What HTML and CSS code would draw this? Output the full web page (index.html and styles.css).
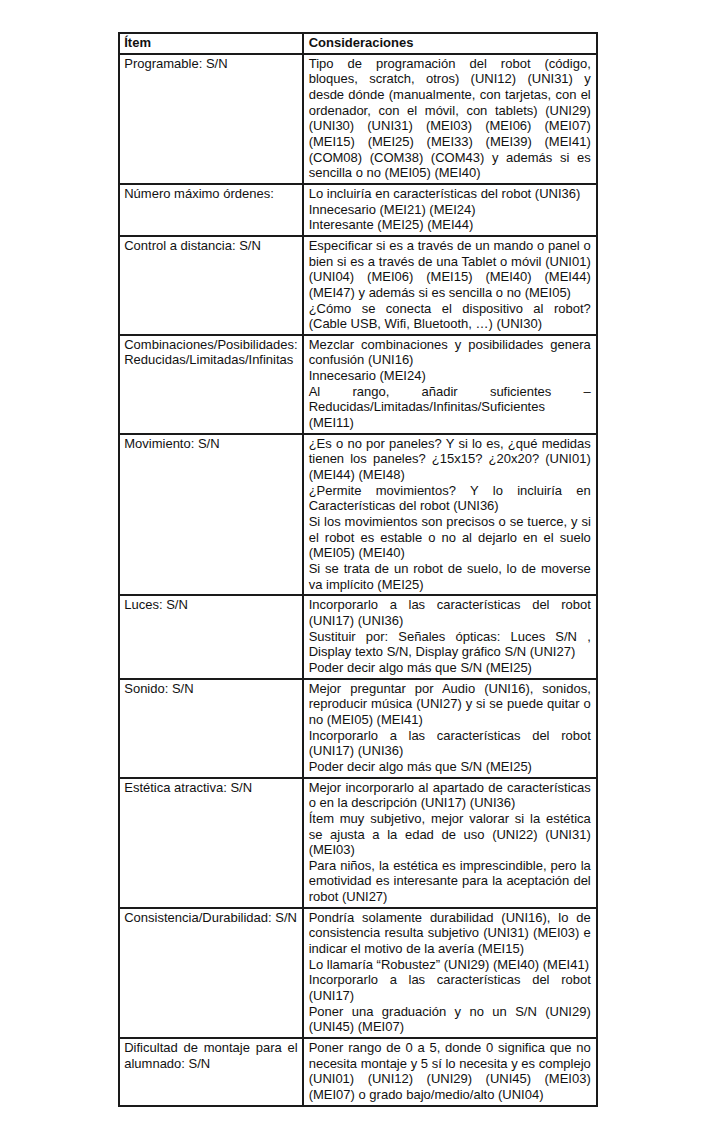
FILE: index.html
```html
<!DOCTYPE html>
<html lang="es">
<head>
<meta charset="utf-8">
<title>Ítem / Consideraciones</title>
<link rel="stylesheet" href="styles.css">
</head>
<body>
<div class="sheet">
<table class="tbl">
  <thead>
    <tr><th class="c1">Ítem</th><th class="c2">Consideraciones</th></tr>
  </thead>
  <tbody>
    <tr>
      <td>Programable: S/N</td>
      <td><p>Tipo de programación del robot (código, bloques, scratch, otros) (UNI12) (UNI31) y desde dónde (manualmente, con tarjetas, con el ordenador, con el móvil, con tablets) (UNI29) (UNI30) (UNI31) (MEI03) (MEI06) (MEI07) (MEI15) (MEI25) (MEI33) (MEI39) (MEI41) (COM08) (COM38) (COM43) y además si es sencilla o no (MEI05) (MEI40)</p></td>
    </tr>
    <tr>
      <td>Número máximo órdenes:</td>
      <td><p>Lo incluiría en características del robot (UNI36)</p><p>Innecesario (MEI21) (MEI24)</p><p>Interesante (MEI25) (MEI44)</p></td>
    </tr>
    <tr>
      <td>Control a distancia: S/N</td>
      <td><p>Especificar si es a través de un mando o panel o bien si es a través de una Tablet o móvil (UNI01) (UNI04) (MEI06) (MEI15) (MEI40) (MEI44) (MEI47) y además si es sencilla o no (MEI05)</p><p>¿Cómo se conecta el dispositivo al robot? (Cable USB, Wifi, Bluetooth, …) (UNI30)</p></td>
    </tr>
    <tr>
      <td>Combinaciones/Posibilidades: Reducidas/Limitadas/Infinitas</td>
      <td><p>Mezclar combinaciones y posibilidades genera confusión (UNI16)</p><p>Innecesario (MEI24)</p><p>Al rango, añadir suficientes – Reducidas/Limitadas/Infinitas/Suficientes (MEI11)</p></td>
    </tr>
    <tr>
      <td>Movimiento: S/N</td>
      <td><p>¿Es o no por paneles? Y si lo es, ¿qué medidas tienen los paneles? ¿15x15? ¿20x20? (UNI01) (MEI44) (MEI48)</p><p>¿Permite movimientos? Y lo incluiría en Características del robot (UNI36)</p><p>Si los movimientos son precisos o se tuerce, y si el robot es estable o no al dejarlo en el suelo (MEI05) (MEI40)</p><p>Si se trata de un robot de suelo, lo de moverse va implícito (MEI25)</p></td>
    </tr>
    <tr>
      <td>Luces: S/N</td>
      <td><p>Incorporarlo a las características del robot (UNI17) (UNI36)</p><p>Sustituir por: Señales ópticas: Luces S/N , Display texto S/N, Display gráfico S/N (UNI27)</p><p>Poder decir algo más que S/N (MEI25)</p></td>
    </tr>
    <tr>
      <td>Sonido: S/N</td>
      <td><p>Mejor preguntar por Audio (UNI16), sonidos, reproducir música (UNI27) y si se puede quitar o no (MEI05) (MEI41)</p><p>Incorporarlo a las características del robot (UNI17) (UNI36)</p><p>Poder decir algo más que S/N (MEI25)</p></td>
    </tr>
    <tr>
      <td>Estética atractiva: S/N</td>
      <td><p>Mejor incorporarlo al apartado de características o en la descripción (UNI17) (UNI36)</p><p>Ítem muy subjetivo, mejor valorar si la estética se ajusta a la edad de uso (UNI22) (UNI31) (MEI03)</p><p>Para niños, la estética es imprescindible, pero la emotividad es interesante para la aceptación del robot (UNI27)</p></td>
    </tr>
    <tr>
      <td>Consistencia/Durabilidad: S/N</td>
      <td><p>Pondría solamente durabilidad (UNI16), lo de consistencia resulta subjetivo (UNI31) (MEI03) e indicar el motivo de la avería (MEI15)</p><p>Lo llamaría “Robustez” (UNI29) (MEI40) (MEI41)</p><p>Incorporarlo a las características del robot (UNI17)</p><p>Poner una graduación y no un S/N (UNI29) (UNI45) (MEI07)</p></td>
    </tr>
    <tr>
      <td>Dificultad de montaje para el alumnado: S/N</td>
      <td><p>Poner rango de 0 a 5, donde 0 significa que no necesita montaje y 5 sí lo necesita y es complejo (UNI01) (UNI12) (UNI29) (UNI45) (MEI03) (MEI07) o grado bajo/medio/alto (UNI04)</p></td>
    </tr>
  </tbody>
</table>
</div>
</body>
</html>
```

FILE: styles.css
```css
html, body {
  margin: 0;
  padding: 0;
  background: #ffffff;
}

body {
  font-family: "Liberation Sans", Arial, sans-serif;
  color: #111111;
}

.sheet {
  padding-top: 32px;
}

.tbl {
  border-collapse: collapse;
  table-layout: fixed;
  margin: 0 auto;
  font-size: 13px;
  line-height: 15.66px;
}

.tbl th,
.tbl td {
  border: 2px solid #1a1a1a;
  vertical-align: top;
  text-align: justify;
  padding: 1px 4px 2px 4px;
}

.tbl th + th,
.tbl td + td {
  padding-left: 5px;
  padding-right: 5px;
}

.tbl th {
  font-weight: bold;
  text-align: left;
}

.c1 {
  width: 173px;
}

.c2 {
  width: 282.1px;
}

.tbl p {
  margin: 0;
}
```
